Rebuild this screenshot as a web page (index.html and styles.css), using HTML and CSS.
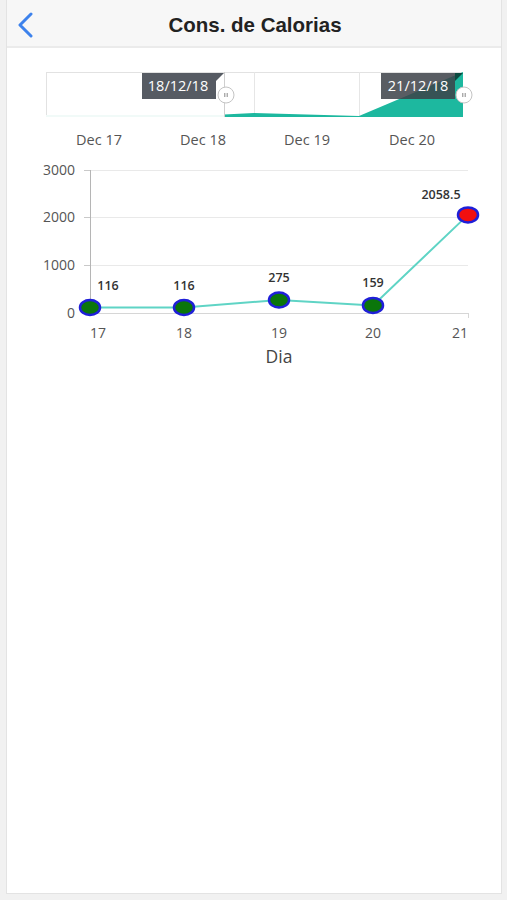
FILE: index.html
```html
<!DOCTYPE html>
<html lang="pt">
  <head>
    <meta charset="UTF-8" />
    <meta name="viewport" content="width=device-width, initial-scale=1.0" />
    <title>Cons. de Calorias</title>
    <link rel="stylesheet" href="styles.css">
  </head>
  <body>
    <div class="screen">
      <header class="header">
        <a class="back" href="#">
          <svg width="18" height="26" viewBox="0 0 18 26">
            <path d="M14 2 L3 13 L14 24" fill="none" stroke="#3d82ec" stroke-width="3" stroke-linecap="round" stroke-linejoin="round" />
          </svg>
        </a>
        <h1 class="title">Cons. de Calorias</h1>
      </header>

      <div class="chart">
        <svg width="496" height="330" viewBox="6 48 496 330">
          <!-- data zoom -->
          <g class="zoom">
            <rect x="45.5" y="72.5" width="416" height="44" fill="#fff" stroke="#e2e2e2" />
            <line x1="253.5" y1="72" x2="253.5" y2="117" stroke="#e6e6e6" />
            <line x1="358.5" y1="72" x2="358.5" y2="117" stroke="#e6e6e6" />
            <path d="M45 115 L149 115 L223 115 L223 117 L45 117 Z" fill="#f1faf8" />
            <path d="M223 114.6 L253 113 L358 116 L462 72 L462 117 L223 117 Z" fill="#1db89f" />
            <line x1="223.5" y1="72" x2="223.5" y2="117" stroke="#cfcfcf" />

            <rect x="141" y="73" width="74" height="26" fill="#565b63" />
            <path d="M215 73 L223 73 L215 81 Z" fill="#565b63" />
            <text x="177" y="91" class="zoom-label">18/12/18</text>
            <circle cx="225" cy="95" r="8" fill="#fff" stroke="#c4c4c4" />
            <line x1="223.8" y1="93" x2="223.8" y2="97" stroke="#888" />
            <line x1="226.2" y1="93" x2="226.2" y2="97" stroke="#888" />

            <rect x="380" y="73" width="74" height="26" fill="#3c4148" fill-opacity="0.85" />
            <path d="M454 73 L462 73 L454 81 Z" fill="#0b4a40" />
            <text x="417" y="91" class="zoom-label">21/12/18</text>
            <circle cx="463" cy="95" r="8" fill="#fff" stroke="#c4c4c4" />
            <line x1="461.8" y1="93" x2="461.8" y2="97" stroke="#888" />
            <line x1="464.2" y1="93" x2="464.2" y2="97" stroke="#888" />

            <text x="98" y="145" class="date">Dec 17</text>
            <text x="202" y="145" class="date">Dec 18</text>
            <text x="306" y="145" class="date">Dec 19</text>
            <text x="411" y="145" class="date">Dec 20</text>
          </g>

          <!-- grid -->
          <g stroke="#e9e9e9">
            <line x1="89" y1="170.5" x2="467" y2="170.5" />
            <line x1="89" y1="217.5" x2="467" y2="217.5" />
            <line x1="89" y1="265.5" x2="467" y2="265.5" />
          </g>
          <g stroke="#c9c9c9">
            <line x1="83" y1="170.5" x2="89" y2="170.5" />
            <line x1="83" y1="217.5" x2="89" y2="217.5" />
            <line x1="83" y1="265.5" x2="89" y2="265.5" />
            <line x1="83" y1="313.5" x2="89" y2="313.5" />
          </g>
          <line x1="89" y1="313.5" x2="467" y2="313.5" stroke="#d6d6d6" />
          <line x1="467.5" y1="313" x2="467.5" y2="318" stroke="#d6d6d6" />
          <line x1="89.5" y1="170" x2="89.5" y2="313" stroke="#b5b5b5" />

          <text x="74" y="175" class="axis-y">3000</text>
          <text x="74" y="222" class="axis-y">2000</text>
          <text x="74" y="270" class="axis-y">1000</text>
          <text x="74" y="318" class="axis-y">0</text>

          <polyline points="89,307.5 183,307.5 278,300 372,305.4 467,214.9" fill="none" stroke="#5fd4c5" stroke-width="2" />

          <g stroke="#1f1fd8" stroke-width="2.5">
            <ellipse cx="89" cy="307.5" rx="10" ry="7.5" fill="#0b760b" />
            <ellipse cx="183" cy="307.5" rx="10" ry="7.5" fill="#0b760b" />
            <ellipse cx="278" cy="300" rx="10" ry="7.5" fill="#0b760b" />
            <ellipse cx="372" cy="305.4" rx="10" ry="7.5" fill="#0b760b" />
            <ellipse cx="467" cy="214.9" rx="10" ry="7.5" fill="#f20f0f" />
          </g>

          <text x="107" y="290" class="value">116</text>
          <text x="183" y="290" class="value">116</text>
          <text x="278" y="282" class="value">275</text>
          <text x="372" y="287" class="value">159</text>
          <text x="440" y="199" class="value">2058.5</text>

          <text x="97" y="338" class="axis-x">17</text>
          <text x="183" y="338" class="axis-x">18</text>
          <text x="278" y="338" class="axis-x">19</text>
          <text x="372" y="338" class="axis-x">20</text>
          <text x="459" y="338" class="axis-x">21</text>
          <text x="278" y="363" class="axis-name">Dia</text>
        </svg>
      </div>
    </div>
  </body>
</html>
```

FILE: styles.css
```css
body {
  margin: 0;
  background-color: #f1f1f1;
  font-family: "Liberation Sans", Arial, sans-serif;
}

.screen {
  width: 496px;
  height: 894px;
  margin: 0 0 0 6px;
  background-color: #fff;
  border-left: 1px solid #e3e3e3;
  border-right: 1px solid #e3e3e3;
  border-bottom: 1px solid #e3e3e3;
  box-sizing: border-box;
  overflow: hidden;
}

.header {
  height: 48px;
  padding-top: 3px;
  background-color: #f7f7f7;
  border-bottom: 2px solid #ebebeb;
  box-sizing: border-box;
  display: flex;
  align-items: center;
  justify-content: center;
  position: relative;
}

.back {
  position: absolute;
  left: 10px;
  top: 12px;
  display: block;
  line-height: 0;
}

.title {
  margin: 0 0 0 2px;
  font-size: 20.5px;
  font-weight: bold;
  color: #222;
}

.chart {
  display: block;
}

.chart svg {
  display: block;
}

.zoom-label {
  font-family: "Open Sans", "Noto Sans", sans-serif;
  font-size: 14.5px;
  fill: #fff;
  text-anchor: middle;
}

.date,
.axis-x,
.axis-y,
.value,
.axis-name {
  font-family: "Open Sans", "Noto Sans", sans-serif;
}

.date {
  font-size: 14.5px;
  fill: #555;
  text-anchor: middle;
}

.axis-y {
  font-size: 14px;
  fill: #555;
  text-anchor: end;
}

.axis-x {
  font-size: 14px;
  fill: #555;
  text-anchor: middle;
}

.value {
  font-size: 12.5px;
  font-weight: 600;
  fill: #333;
  text-anchor: middle;
}

.axis-name {
  font-size: 17.5px;
  fill: #444;
  text-anchor: middle;
}
```
